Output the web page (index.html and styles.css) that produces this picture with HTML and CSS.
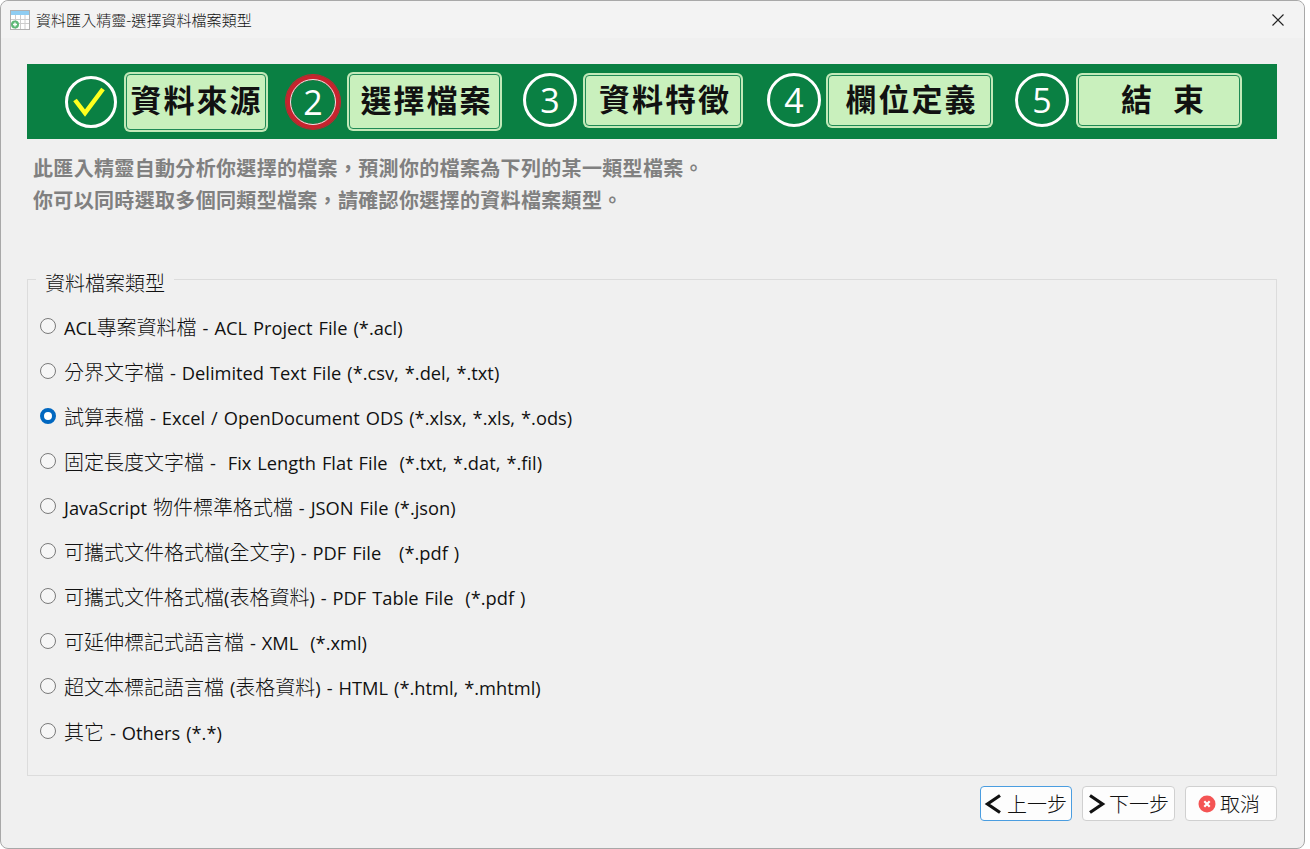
FILE: index.html
```html
<!DOCTYPE html>
<html lang="zh-Hant">
<head>
<meta charset="utf-8">
<title>資料匯入精靈-選擇資料檔案類型</title>
<link rel="stylesheet" href="styles.css">
</head>
<body>
<div class="window">
  <header class="titlebar">
    <svg class="app-icon" width="20" height="20" viewBox="0 0 20 20">
      <rect x="0.5" y="0.5" width="19" height="19" fill="#fff" stroke="#b0b0b0"/>
      <rect x="1" y="1" width="18" height="4" fill="#8fcdf2"/>
      <path d="M1 9.5H19M1 13.5H19M5.5 5V19M10.5 5V19M15 5V19" stroke="#cdcdcd" fill="none"/>
      <circle cx="5" cy="14.5" r="4" fill="#5fb878"/>
      <path d="M3 14.5H7M5 12.5V16.5" stroke="#fff" stroke-width="1.4"/>
    </svg>
    <span class="title-text">資料匯入精靈-選擇資料檔案類型</span>
    <svg class="close-icon" width="12" height="12" viewBox="0 0 12 12"><path d="M0.5 0.5L11.5 11.5M11.5 0.5L0.5 11.5" stroke="#222" stroke-width="1.1" fill="none"/></svg>
  </header>
  <main class="content">
    <nav class="banner">
      <div class="step step-1">
        <svg class="mark" width="54" height="54" viewBox="0 0 54 54"><circle cx="27" cy="27" r="24.5" fill="none" stroke="#fff" stroke-width="3"/><path d="M11 25L21 38L39 14" fill="none" stroke="#ffff1e" stroke-width="4.5"/></svg>
        <div class="label label-1">資料來源</div>
      </div>
      <div class="step step-2">
        <div class="num num-current">2</div>
        <div class="label label-2">選擇檔案</div>
      </div>
      <div class="step step-3">
        <div class="num">3</div>
        <div class="label label-3">資料特徵</div>
      </div>
      <div class="step step-4">
        <div class="num">4</div>
        <div class="label label-4">欄位定義</div>
      </div>
      <div class="step step-5">
        <div class="num">5</div>
        <div class="label label-5">結&nbsp;束</div>
      </div>
    </nav>
    <p class="intro">此匯入精靈自動分析你選擇的檔案&#xFF0C;預測你的檔案為下列的某一類型檔案。<br>你可以同時選取多個同類型檔案&#xFF0C;請確認你選擇的資料檔案類型。</p>
    <fieldset class="types">
      <legend class="types-legend">資料檔案類型</legend>
      <label class="option"><input type="radio" name="t"><span>ACL<b>專案資料檔</b> - ACL Project File (*.acl)</span></label>
      <label class="option"><input type="radio" name="t"><span><b>分界文字檔</b> - Delimited Text File (*.csv, *.del, *.txt)</span></label>
      <label class="option"><input type="radio" name="t" checked><span><b>試算表檔</b> - Excel / OpenDocument ODS (*.xlsx, *.xls, *.ods)</span></label>
      <label class="option"><input type="radio" name="t"><span><b>固定長度文字檔</b> -  Fix Length Flat File  (*.txt, *.dat, *.fil)</span></label>
      <label class="option"><input type="radio" name="t"><span>JavaScript <b>物件標準格式檔</b> - JSON File (*.json)</span></label>
      <label class="option"><input type="radio" name="t"><span><b>可攜式文件格式檔</b>(<b>全文字</b>) - PDF File   (*.pdf )</span></label>
      <label class="option"><input type="radio" name="t"><span><b>可攜式文件格式檔</b>(<b>表格資料</b>) - PDF Table File  (*.pdf )</span></label>
      <label class="option"><input type="radio" name="t"><span><b>可延伸標記式語言檔</b> - XML  (*.xml)</span></label>
      <label class="option"><input type="radio" name="t"><span><b>超文本標記語言檔</b> (<b>表格資料</b>) - HTML (*.html, *.mhtml)</span></label>
      <label class="option"><input type="radio" name="t"><span><b>其它</b> - Others (*.*)</span></label>
    </fieldset>
    <footer class="actions">
      <button class="btn btn-prev" type="button"><svg width="18" height="22" viewBox="0 0 18 22"><path d="M16 2.5L3.5 11L16 19.5" fill="none" stroke="#111" stroke-width="3.2"/></svg><span>上一步</span></button>
      <button class="btn btn-next" type="button"><svg width="18" height="22" viewBox="0 0 18 22"><path d="M2 2.5L14.5 11L2 19.5" fill="none" stroke="#111" stroke-width="3.2"/></svg><span>下一步</span></button>
      <button class="btn btn-cancel" type="button"><svg width="18" height="18" viewBox="0 0 18 18"><circle cx="9" cy="9" r="8.5" fill="#f45454"/><path d="M6.3 6.3L11.7 11.7M11.7 6.3L6.3 11.7" stroke="#fff" stroke-width="2.2"/></svg><span>取消</span></button>
    </footer>
  </main>
</div>
</body>
</html>
```
FILE: styles.css
```css
* { box-sizing: border-box; }
html, body { margin: 0; height: 100%; }
body {
  background: #fff;
  padding: 0 5px 0 0;
  font-family: "Open Sans", "Noto Sans CJK TC", sans-serif;
  color: #111;
  overflow: hidden;
}
.window {
  height: 849px;
  width: 1305px;
  background: #f0f0f0;
  border: 1px solid #a8a8a8;
  border-radius: 8px;
  display: flex;
  flex-direction: column;
}
.titlebar {
  height: 37px;
  flex: none;
  display: flex;
  align-items: center;
  padding: 0 20px 0 9px;
  background: #f3f3f3;
  border-radius: 8px 8px 0 0;
}
.app-icon { flex: none; }
.title-text {
  margin-left: 6px;
  font-family: "Noto Sans CJK TC", sans-serif;
  font-size: 15px;
  font-weight: 300;
  letter-spacing: 0.05px;
  color: #111;
}
.close-icon { margin-left: auto; }
.content { flex: 1; display: flex; flex-direction: column; padding: 26px 27px 0 26px; }
.banner {
  height: 75px;
  flex: none;
  background: #0a8043;
  display: flex;
  align-items: center;
}
.step { display: flex; align-items: center; flex: none; }
.step-1 { margin-left: 37px; gap: 8px; }
.step-2 { margin-left: 20px; gap: 9px; }
.step-3 { margin-left: 23px; gap: 8px; margin-bottom: 3px; }
.step-4 { margin-left: 26px; gap: 7px; margin-bottom: 3px; }
.step-5 { margin-left: 24px; gap: 9px; margin-bottom: 3px; }
.mark { flex: none; }
.num {
  width: 54px;
  height: 54px;
  border: 3.5px solid #fff;
  border-radius: 50%;
  color: #fff;
  display: flex;
  align-items: center;
  justify-content: center;
  font-size: 34px;
  font-weight: 400;
  line-height: 1;
  flex: none;
}
.num-current { box-shadow: 0 0 0 1px #c8232e; border: 5px solid #c8232e; outline: 1px solid #e8e8e8; outline-offset: -5px; }
.label {
  background: #c9f0bd;
  border: 1.5px solid #1f8a55;
  box-shadow: 0 0 0 2px #c3e9b9;
  border-radius: 4px;
  display: flex;
  align-items: center;
  justify-content: center;
  padding: 0 0 6px 4px;
  font-family: "Noto Sans CJK TC", sans-serif;
  font-weight: 700;
  font-size: 31px;
  letter-spacing: 2px;
  color: #111;
  white-space: nowrap;
  line-height: 1;
}
.label-1 { width: 140px; height: 56px; padding-left: 1px; }
.label-2 { width: 151px; height: 55px; }
.label-3 { width: 156px; height: 51px; }
.label-4 { width: 163px; height: 51px; }
.label-5 { width: 162px; height: 51px; letter-spacing: 7px; padding-left: 14px; }
.intro {
  margin: 13px 0 0 6px;
  font-family: "Noto Sans CJK TC", sans-serif;
  font-size: 20px;
  font-weight: 700;
  line-height: 32px;
  letter-spacing: 0.33px;
  color: #808080;
  flex: none;
}
.types {
  margin: 46px 0 0;
  padding: 8px 0 0 12px;
  height: 514px;
  border: 1px solid #dcdcdc;
  flex: none;
  min-inline-size: 0;
}
.types-legend {
  margin-left: -4px;
  padding: 8px 9px 0;
  font-family: "Noto Sans CJK TC", sans-serif;
  font-size: 20px;
  font-weight: 300;
  line-height: 26px;
  color: #111;
}
.option {
  height: 45px;
  display: flex;
  align-items: center;
  gap: 8px;
  font-size: 18.3px;
  word-spacing: 1.2px;
  white-space: pre;
  color: #111;
}
.option b {
  font-family: "Noto Sans CJK TC", sans-serif;
  font-size: 20px;
  font-weight: 300;
}
.option input {
  appearance: none;
  margin: -2px 0 0 0;
  width: 16px;
  height: 16px;
  border: 1px solid #7a7a7a;
  border-radius: 50%;
  background: #f6f6f6;
  flex: none;
}
.option input:checked {
  background: #fff;
  border: 4px solid #0067c0;
}
.actions {
  display: flex;
  justify-content: flex-end;
  gap: 10px;
  margin-top: 10px;
}
.btn {
  height: 35px;
  background: #fdfdfd;
  border: 1px solid #d0d0d0;
  border-radius: 4px;
  display: flex;
  align-items: center;
  font-family: "Noto Sans CJK TC", sans-serif;
  font-size: 20px;
  font-weight: 300;
  color: #111;
}
.btn-prev { width: 92px; padding: 0 0 0 3px; gap: 5px; border-color: #4a9de0; }
.btn-next { width: 93px; padding: 0 0 0 5px; gap: 3px; }
.btn-cancel { width: 92px; padding: 0 0 0 12px; gap: 4px; }
```
